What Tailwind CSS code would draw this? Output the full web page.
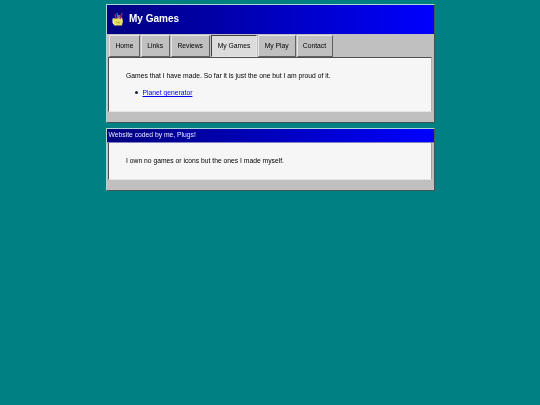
<!DOCTYPE html>
<html><head><meta charset="utf-8"><script src="https://cdn.jsdelivr.net/npm/@tailwindcss/browser@4"></script></head>
<body class="bg-[#008080] h-[405px] overflow-hidden font-['Liberation_Sans',sans-serif] text-black">
<div class="w-[329px] mx-auto pt-1 flex flex-col gap-[5px] blur-[0.25px]">
  <section class="bg-[#c0c0c0] border-t border-l border-[#a8d8d8] border-r border-b border-r-[#405858] border-b-[#405858] h-[118.5px] flex flex-col">
    <header class="h-[28.5px] bg-linear-to-r from-[#000080] to-[#0000ff] flex items-center pl-[5px] gap-[5.5px] shrink-0">
      <svg width="12" height="14" viewBox="0 0 12 14"><path d="M1 6.5 L10 5.5 L11 9 L10 13.5 L3 13.5 L1 11Z" fill="#e8e060"/><path d="M1 6.5 L1 11 L3 13.5" fill="none" stroke="#f4f4d0" stroke-width="1"/><path d="M3 2 L4 7" stroke="#c03030" stroke-width="1.2"/><path d="M5 1 L6 7" stroke="#30a050" stroke-width="1.2"/><path d="M7 3 L7 7" stroke="#d0d0d0" stroke-width="1"/><path d="M10 1 L8 7" stroke="#b02060" stroke-width="1.4"/><path d="M4 10 L8 11" stroke="#a0a830" stroke-width="1"/></svg>
      <h1 class="text-white font-bold text-[10px] leading-none">My Games</h1>
    </header>
    <nav class="flex gap-px pl-[2.5px] pt-[1px] h-[23.5px] shrink-0 text-[6.75px]">
      <a class="w-[31px] flex items-center justify-center border border-[#e4e4e4] border-r-[#606060] border-b-[#606060]">Home</a>
      <a class="w-[28.5px] flex items-center justify-center border border-[#e4e4e4] border-r-[#606060] border-b-[#606060]">Links</a>
      <a class="w-[39.5px] flex items-center justify-center border border-[#e4e4e4] border-r-[#606060] border-b-[#606060]">Reviews</a>
      <a class="w-[46px] flex items-center justify-center border border-[#404040] border-r-[#e4e4e4] border-b-[#e4e4e4] bg-[#dcdcdc]">My Games</a>
      <a class="w-[37.5px] flex items-center justify-center border border-[#e4e4e4] border-r-[#606060] border-b-[#606060]">My Play</a>
      <a class="w-[36px] flex items-center justify-center border border-[#e4e4e4] border-r-[#606060] border-b-[#606060]">Contact</a>
    </nav>
    <main class="ml-[1.5px] mr-[1.5px] h-[54.5px] bg-[#f6f6f6] border border-[#505050] border-r-[#b0b0b0] border-b-[#e4e4e4] pl-[17px] pt-[13px] text-[6.75px] leading-[9px]">
      <p>Games that I have made. So far it is just the one but I am proud of it.</p>
      <ul class="pl-[9px] mt-[8px]"><li class="flex items-center gap-[5px]"><span class="w-[2.5px] h-[2.5px] rounded-full bg-[#222]"></span><a class="text-[#0000ee] underline">Planet generator</a></li></ul>
    </main>
  </section>
  <section class="bg-[#c0c0c0] border-t border-l border-[#a8d8d8] border-r border-b border-r-[#405858] border-b-[#405858] h-[63px] flex flex-col">
    <header class="h-[14.5px] bg-linear-to-r from-[#000080] to-[#0000ff] border-b border-b-[#8080c0] text-[#e8e8ff] text-[6.75px] flex items-center pl-[2px] shrink-0">Website coded by me, Plugs!</header>
    <main class="ml-[1.5px] mr-[1.5px] h-[37px] bg-[#f6f6f6] border-l border-b border-l-[#505050] border-b-[#e4e4e4] border-r border-r-[#a0a0a0] pl-[17px] pt-[13px] text-[6.75px] leading-[9px]">
      <p>I own no games or icons but the ones I made myself.</p>
    </main>
  </section>
</div>
</body></html>
